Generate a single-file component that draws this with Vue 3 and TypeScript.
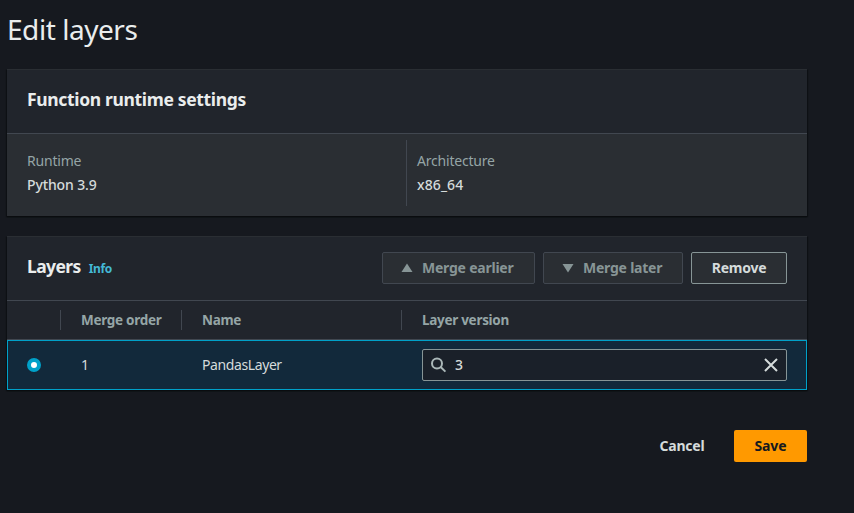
<script setup lang="ts">
import { ref } from 'vue'

interface Layer {
  order: number
  name: string
  version: string
}

const layers = ref<Layer[]>([{ order: 1, name: 'PandasLayer', version: '3' }])
const selected = ref<number>(0)
</script>

<template>
  <main class="page">
    <h1 class="title">Edit layers</h1>

    <section class="panel runtime">
      <header class="panel-head"><h2>Function runtime settings</h2></header>
      <div class="columns">
        <div class="column">
          <div class="label">Runtime</div>
          <div class="value">Python 3.9</div>
        </div>
        <div class="column divided">
          <div class="label">Architecture</div>
          <div class="value arch">x86_64</div>
        </div>
      </div>
    </section>

    <section class="panel layers">
      <header class="panel-head">
        <h2 class="short">Layers</h2>
        <a class="info">Info</a>
        <div class="actions">
          <button class="btn disabled earlier" disabled>
            <svg width="12" height="10" viewBox="0 0 12 10"><path d="M6 .5 11.5 9H.5Z" /></svg>
            <span>Merge earlier</span>
          </button>
          <button class="btn disabled later" disabled>
            <svg width="12" height="10" viewBox="0 0 12 10"><path d="M6 9.5 .5 1H11.5Z" /></svg>
            <span>Merge later</span>
          </button>
          <button class="btn remove">Remove</button>
        </div>
      </header>
      <div class="grid head">
        <div class="cell"></div>
        <div class="cell">Merge order</div>
        <div class="cell">Name</div>
        <div class="cell">Layer version</div>
      </div>
      <div v-for="(layer, i) in layers" :key="layer.name" class="grid row" @click="selected = i">
        <div class="pick"><span class="radio" :class="{ on: selected === i }"></span></div>
        <div class="text">{{ layer.order }}</div>
        <div class="text name">{{ layer.name }}</div>
        <div class="field">
          <svg class="search" width="16" height="16" viewBox="0 0 16 16">
            <circle cx="6" cy="6.4" r="5" />
            <path d="M9.6 10 14.4 14.6" />
          </svg>
          <span class="input">{{ layer.version }}</span>
          <svg class="clear" width="16" height="16" viewBox="0 0 16 16">
            <path d="M2 2 14 14M14 2 2 14" />
          </svg>
        </div>
      </div>
    </section>

    <footer class="footer">
      <button class="cancel">Cancel</button>
      <button class="save">Save</button>
    </footer>
  </main>
</template>

<style>
body {
  background: #16191f;
}
</style>

<style scoped>
.page {
  box-sizing: border-box;
  width: 854px;
  height: 513px;
  padding: 11px 47px 0 7px;
  background: #16191f;
  color: #d5dbdb;
  font: 14px/22px "Noto Sans", sans-serif;
  overflow: hidden;
}
h1, h2 { margin: 0; color: #eaeded; }
.title {
  height: 58px;
  font-size: 28px;
  line-height: 36px;
  font-weight: 400;
  letter-spacing: -0.45px;
}
.panel {
  box-sizing: border-box;
  background: #21252c;
  border-top: 1px solid #2a2e33;
  box-shadow: 0 1px 1px 0 #0a0c0f, 1px 1px 1px 0 #0f1216, -1px 1px 1px 0 #0f1216;
}
.panel-head {
  box-sizing: border-box;
  height: 64px;
  padding: 0 20px 1px;
  display: flex;
  align-items: center;
  border-bottom: 1px solid #414750;
}
h2 {
  margin-bottom: 4px;
  font-size: 17.5px;
  line-height: 22px;
  font-weight: 700;
  letter-spacing: -0.34px;
  white-space: nowrap;
}
.short { letter-spacing: -0.6px; }
.runtime { height: 147px; }
.columns {
  box-sizing: border-box;
  height: 82px;
  padding: 6px 0 10px 20px;
  display: flex;
  background: #2a2e33;
}
.column { box-sizing: border-box; width: 379px; padding-top: 10px; }
.divided { border-left: 1px solid #414750; padding-left: 10px; }
.label { color: #95a5a6; line-height: 22px; letter-spacing: -0.2px; }
.value { line-height: 22px; margin-top: 2px; font-weight: 500; letter-spacing: -0.12px; }
.arch { letter-spacing: 0.1px; }
.layers { height: 154px; margin-top: 20px; }
.info { margin: 1px 0 0 8px; font-size: 12px; line-height: 18px; font-weight: 700; letter-spacing: -0.4px; color: #44b9d6; }
.actions { display: flex; gap: 8px; margin-left: auto; }
button { font: 700 14px/20px "Noto Sans", sans-serif; letter-spacing: -0.23px; white-space: nowrap; }
.btn {
  box-sizing: border-box;
  height: 32px;
  padding: 0 0 1px;
  display: flex;
  align-items: center;
  background: #2a2e33;
  border: 1px solid #879596;
  border-radius: 2px;
  color: #d5dbdb;
}
.disabled { border-color: #414750; color: #879596; }
.disabled svg { margin: 0 9px 0 18px; fill: #879596; }
.earlier { width: 153px; }
.later { width: 140px; }
.remove { width: 96px; justify-content: center; }
.grid { display: grid; grid-template-columns: 54px 121px 220px 1fr; align-items: center; }
.head {
  box-sizing: border-box;
  height: 39px;
  border-bottom: 1px solid #414750;
  color: #95a5a6;
  font-size: 13.5px;
  font-weight: 700;
  letter-spacing: -0.29px;
}
.head .cell { box-sizing: border-box; height: 20px; line-height: 20px; padding-left: 20px; border-right: 1px solid #414750; }
.head .cell:last-child { border-right: 0; }
.row { box-sizing: border-box; height: 50px; background: #12293b; border: 1px solid #00a1c9; }
.pick { padding-left: 19px; display: flex; }
.text { padding-left: 19px; }
.name { letter-spacing: -0.4px; }
.radio { box-sizing: border-box; width: 14px; height: 14px; border: 1px solid #879596; border-radius: 50%; }
.radio.on { border: 4px solid #00a1c9; background: #fff; }
.field {
  box-sizing: border-box;
  height: 32px;
  margin: 0 19px;
  padding: 0 7px 0 8px;
  display: flex;
  align-items: center;
  background: #1a2029;
  border: 1px solid #879596;
  border-radius: 2px;
}
.search, .clear { fill: none; stroke-width: 2; }
.search { stroke: #aab7b8; }
.clear { margin-left: auto; stroke: #d5dbdb; }
.input { margin-left: 8px; font-weight: 500; }
.footer { display: flex; justify-content: flex-end; margin-top: 40px; }
.cancel, .save { box-sizing: border-box; height: 32px; padding: 0; border: 0; border-radius: 2px; }
.cancel { width: 88px; margin-right: 8px; background: none; color: #d5dbdb; }
.save { width: 73px; background: #ff9900; color: #16191f; letter-spacing: -0.1px; }
</style>
